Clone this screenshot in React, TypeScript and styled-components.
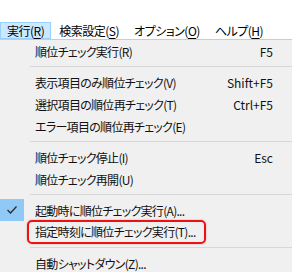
import styled, { createGlobalStyle } from 'styled-components';

const GlobalStyle = createGlobalStyle`
  html, body {
    margin: 0;
    padding: 0;
    background: #ffffff;
  }
  body {
    font-family: 'Noto Sans CJK JP', 'Noto Sans', sans-serif;
    font-size: 12px;
    color: #000;
  }
`;

interface MenuEntry {
  label: string;
  shortcut?: string;
  checked?: boolean;
  marked?: boolean;
}

const sections: MenuEntry[][] = [
  [{ label: '順位チェック実行(R)', shortcut: 'F5' }],
  [
    { label: '表示項目のみ順位チェック(V)', shortcut: 'Shift+F5' },
    { label: '選択項目の順位再チェック(T)', shortcut: 'Ctrl+F5' },
    { label: 'エラー項目の順位再チェック(E)' },
  ],
  [
    { label: '順位チェック停止(I)', shortcut: 'Esc' },
    { label: '順位チェック再開(U)' },
  ],
  [
    { label: '起動時に順位チェック実行(A)...', checked: true },
    { label: '指定時刻に順位チェック実行(T)...', marked: true },
  ],
  [{ label: '自動シャットダウン(Z)...' }],
];

const Screen = styled.div`
  width: 292px;
  height: 272px;
  overflow: hidden;
  background: #ffffff;
  font-feature-settings: 'palt';
`;

const MenuBar = styled.div`
  display: flex;
  padding-top: 22px;
  background: #ffffff;
`;

const BarItem = styled.div<{ $active?: boolean }>`
  height: 15px;
  line-height: 15px;
  padding: 0 6px;
  margin-right: 1px;
  border: 1px solid ${(p) => (p.$active ? '#99d1ff' : 'transparent')};
  background: ${(p) => (p.$active ? '#cce8ff' : 'transparent')};
  white-space: nowrap;
  letter-spacing: -0.5px;
  u {
    text-decoration: underline;
    text-underline-offset: 2px;
  }
`;

const Dropdown = styled.div`
  border-top: 1px solid #cccccc;
  background: #f0f0f0;
  display: flex;
  flex-direction: column;
`;

const Item = styled.div`
  display: flex;
  align-items: center;
  height: 22px;
  padding-right: 19px;
  white-space: nowrap;
`;

const Gutter = styled.div<{ $checked?: boolean }>`
  width: 24px;
  height: 22px;
  margin-right: 11px;
  display: flex;
  align-items: center;
  justify-content: center;
  background: ${(p) => (p.$checked ? '#90c8f6' : 'transparent')};
`;

const Label = styled.span`
  flex: 1;
  color: #111;
  letter-spacing: -0.7px;
`;

const Marked = styled.span`
  margin-left: -8px;
  margin-right: auto;
  padding: 0 8px 0 6px;
  height: 20px;
  line-height: 20px;
  border: 2px solid #ee1111;
  border-radius: 5px;
  box-shadow: 0 0 2px rgba(200, 0, 0, 0.35);
  color: #111;
  letter-spacing: -0.7px;
`;

const Shortcut = styled.span`
  color: #111;
`;

const Separator = styled.div`
  height: 9px;
  margin-left: 30px;
  display: flex;
  align-items: center;
  &::after {
    content: '';
    flex: 1;
    height: 1px;
    background: #d7d7d7;
  }
`;

const CheckMark = () => (
  <svg width="12" height="10" viewBox="0 0 12 10">
    <polyline points="1.5,5 4.5,8 10.5,1.5" fill="none" stroke="#2b2b2b" strokeWidth="1.3" />
  </svg>
);

const barItems = [
  { text: '実行', key: 'R', active: true },
  { text: '検索設定', key: 'S' },
  { text: 'オプション', key: 'O' },
  { text: 'ヘルプ', key: 'H' },
];

export default function App() {
  return (
    <Screen>
      <GlobalStyle />
      <MenuBar>
        {barItems.map((b) => (
          <BarItem key={b.text} $active={b.active}>
            {b.text}(<u>{b.key}</u>)
          </BarItem>
        ))}
      </MenuBar>
      <Dropdown>
        {sections.map((section, si) => (
          <div key={si}>
            {si > 0 && <Separator />}
            {section.map((entry) => (
              <Item key={entry.label}>
                <Gutter $checked={entry.checked}>{entry.checked && <CheckMark />}</Gutter>
                {entry.marked ? <Marked>{entry.label}</Marked> : <Label>{entry.label}</Label>}
                {entry.shortcut && <Shortcut>{entry.shortcut}</Shortcut>}
              </Item>
            ))}
          </div>
        ))}
      </Dropdown>
    </Screen>
  );
}
